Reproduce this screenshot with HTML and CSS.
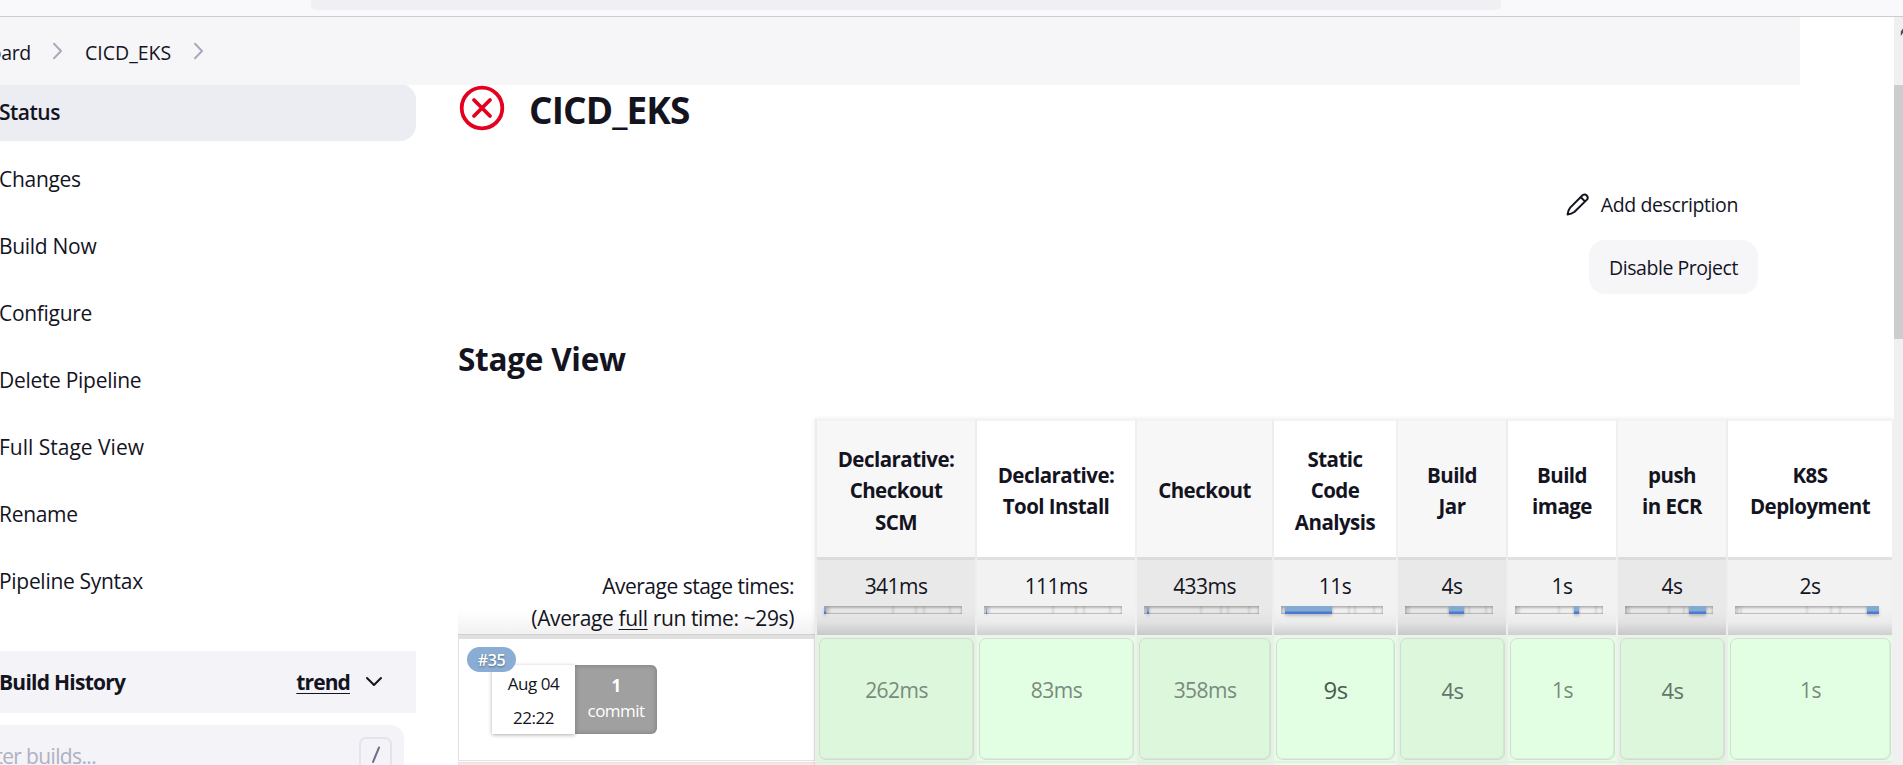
FILE: index.html
```html
<!DOCTYPE html>
<html lang="en">
<head>
<meta charset="utf-8">
<title>CICD_EKS [Jenkins]</title>
<link rel="stylesheet" href="styles.css">
</head>
<body>
<div class="toolbar"><div class="address"></div></div>
<div class="viewport">
  <div class="page">
    <nav class="crumbs">
      <span class="crumb crumb-home">Dashboard</span>
      <svg class="crumb-sep" width="12" height="20" viewBox="0 0 12 20"><path d="M2 2.7 L9 10 L2 17.3"/></svg>
      <span class="crumb crumb-job">CICD_EKS</span>
      <svg class="crumb-sep" width="12" height="20" viewBox="0 0 12 20"><path d="M2 2.7 L9 10 L2 17.3"/></svg>
    </nav>
    <div class="columns">
      <aside class="side">
        <div class="tasks">
          <a class="task active">Status</a>
          <a class="task">Changes</a>
          <a class="task">Build Now</a>
          <a class="task">Configure</a>
          <a class="task">Delete Pipeline</a>
          <a class="task task-wide">Full Stage View</a>
          <a class="task">Rename</a>
          <a class="task">Pipeline Syntax</a>
        </div>
        <div class="history">
          <span class="history-title">Build History</span>
          <a class="trend">trend</a>
          <svg class="history-toggle" width="18" height="12" viewBox="0 0 18 12"><path d="M2 2 L9 9 L16 2"/></svg>
        </div>
        <div class="filter">
          <span class="filter-text"><span>Filter builds...</span></span>
          <span class="key"><svg width="10" height="18" viewBox="0 0 10 18"><path d="M8 1.5 L2 16"/></svg></span>
        </div>
      </aside>
      <main class="main">
        <div class="headline">
          <svg width="46" height="46" viewBox="0 0 46 46"><circle cx="23" cy="23" r="20.3"/><path d="M15 15 L31 31 M31 15 L15 31"/></svg>
          <h1>CICD_EKS</h1>
        </div>
        <div class="actions">
          <a class="describe">
            <svg width="24" height="24" viewBox="0 0 24 24"><path d="M1.6 22.4 Q1.8 18.6 4.2 15.6 L16.8 3 A3.2 3.2 0 0 1 21.2 7.4 L8.6 19.8 Q5.4 22.2 1.6 22.4 Z M14.8 5.2 L19 9.4"/></svg>
            <span>Add description</span>
          </a>
          <button class="disable">Disable Project</button>
        </div>
        <h2>Stage View</h2>
        <div class="stage-view">
          <div class="runs">
            <div class="average">
              <div>Average stage times:</div>
              <div class="full-time">(Average <u>full</u> run time: ~29s)</div>
            </div>
            <div class="run">
              <span class="badge">#35</span>
              <div class="run-box">
                <div class="date"><span>Aug 04</span><span>22:22</span></div>
                <div class="commit"><b>1</b><span>commit</span></div>
              </div>
            </div>
            <div class="run-failed"></div>
          </div>
          <div class="stages" id="stages"></div>
        </div>
      </main>
    </div>
  </div>
  <div class="scrollbar">
    <div class="scroll-up"><svg width="9" height="10" viewBox="0 0 9 10"><path d="M6.8 9 V4.5 L9 1.5 V6 Z"/></svg></div>
    <div class="thumb"></div>
  </div>
</div>
<script src="stages.js"></script>
</body>
</html>
```
FILE: stages.js
```js
const stages = [
  { name: ["Declarative:", "Checkout", "SCM"], avg: "341ms", run: "262ms", weight: "low" },
  { name: ["Declarative:", "Tool Install"], avg: "111ms", run: "83ms", weight: "low" },
  { name: ["Checkout"], avg: "433ms", run: "358ms", weight: "low" },
  { name: ["Static", "Code", "Analysis"], avg: "11s", run: "9s", weight: "high" },
  { name: ["Build", "Jar"], avg: "4s", run: "4s", weight: "mid" },
  { name: ["Build", "image"], avg: "1s", run: "1s", weight: "low" },
  { name: ["push", "in ECR"], avg: "4s", run: "4s", weight: "mid" },
  { name: ["K8S", "Deployment"], avg: "2s", run: "1s", weight: "low", failed: true }
];
// Start of each stage as a share of the whole run, in percent
const marks = [0, 1.4, 2.2, 4, 50, 67, 72.7, 91.7, 100];

document.getElementById("stages").innerHTML = stages.map((stage, i) => {
  const bar = stages.map((_, k) =>
    `<i class="seg${k === i ? " on" : ""}" style="width:${(marks[k + 1] - marks[k]).toFixed(2)}%"></i>`).join("");
  return `<div class="stage">
    <div class="stage-name">${stage.name.map(n => `<span>${n}</span>`).join("")}</div>
    <div class="stage-avg"><span>${stage.avg}</span><div class="bar">${bar}</div></div>
    <div class="stage-cell"><div class="result ${stage.weight}">${stage.run}</div></div>
    <div class="stage-next${stage.failed ? " failed" : ""}"></div>
  </div>`;
}).join("");
```
FILE: styles.css
```css
* { box-sizing: border-box; }
body {
  margin: 0;
  height: 765px;
  overflow: hidden;
  background: #fff;
  color: #14141f;
  font: 21px/32px "Open Sans", "Noto Sans", sans-serif;
  letter-spacing: -0.3px;
  white-space: nowrap;
}
svg { fill: none; stroke: currentColor; stroke-linecap: round; stroke-linejoin: round; flex: none; }
h1, h2 { margin: 0; font-weight: 700; }

.toolbar { height: 17px; background: #f9f9fb; border-bottom: 1px solid #ccc; padding-left: 311px; }
.address { width: 1190px; height: 10px; background: #f0eff4; border-radius: 0 0 5px 5px; }

.viewport { display: flex; height: 748px; }
.page { width: 1894px; overflow: hidden; flex: none; }
.scrollbar { width: 9px; background: #f0f0f0; flex: none; }
.scroll-up { height: 68px; padding-top: 10px; line-height: 0; }
.scroll-up svg { fill: #505050; stroke: none; }
.thumb { height: 254px; background: #cdcdcd; }

.crumbs { display: flex; align-items: center; width: 1800px; height: 68px; background: #f6f6f8; font-size: 19.5px; padding-top: 3px; }
.crumb-home { width: 31px; display: flex; justify-content: flex-end; overflow: hidden; }
.crumb-sep { stroke: #a9a9bc; stroke-width: 2; margin: -3px 0 0 21px; }
.crumb-job { margin-left: 21px; width: 87px; letter-spacing: 0; }

.columns { display: flex; height: 680px; }
.side { width: 416px; flex: none; }
.tasks { margin-top: -1px; display: flex; flex-direction: column; gap: 10px; clip-path: inset(1px 0 0 0); }
.task { height: 57px; line-height: 57px; border-radius: 0 16px 16px 0; text-indent: -1px; }
.task-wide { letter-spacing: 0; }
.active { background: #ecedf3; font-weight: 600; letter-spacing: -0.5px; }
.history { display: flex; align-items: center; height: 62px; margin-top: 41px; background: #f3f3f8; font-weight: 700; padding-right: 33px; }
.history-title { margin-left: -1px; flex: 1; letter-spacing: -0.75px; }
.trend { text-decoration: underline; text-decoration-thickness: 1px; text-underline-offset: 3px; margin-right: 15px; letter-spacing: -0.9px; }
.history-toggle { stroke-width: 2; }
.filter { display: flex; justify-content: space-between; width: 404px; height: 62px; margin-top: 12px; padding: 12px 12px 0 0; background: #f3f3f8; border-radius: 0 14px 14px 0; }
.filter-text { width: 96px; height: 38px; line-height: 38px; display: flex; justify-content: flex-end; overflow: hidden; color: #b0b0c2; letter-spacing: -0.65px; }
.key { width: 33px; height: 38px; border: 2px solid #e4e4ee; border-radius: 7px; display: flex; align-items: center; justify-content: center; color: #70708c; }
.key svg { stroke-width: 2; margin-top: -2px; }

.main { flex: 1; padding-left: 42px; }
.headline { display: flex; align-items: center; height: 46px; padding-left: 1px; color: #e6001f; }
.headline svg { stroke-width: 3.8; }
h1 { margin-left: 24px; color: #14141f; font-size: 37px; line-height: 46px; padding-top: 3px; letter-spacing: -0.9px; }
.actions { display: flex; flex-direction: column; align-items: flex-end; width: 1300px; margin-top: 54px; font-size: 19.5px; }
.describe { display: flex; align-items: center; gap: 11px; height: 40px; padding-right: 20px; letter-spacing: -0.4px; }
.describe svg { stroke-width: 2; margin-top: -2px; }
.disable { width: 169px; height: 54px; margin-top: 15px; border: 0; border-radius: 16px; background: #f6f6f9; color: inherit; font: inherit; letter-spacing: -0.45px; padding: 2px 0 0; }
h2 { font-size: 31.5px; line-height: 40px; margin-top: 45px; letter-spacing: -0.25px; }

.stage-view { display: flex; margin-top: 40px; height: 400px; }
.runs { width: 357px; flex: none; padding-top: 141px; }
.average { height: 75px; padding: 10px 21px 0 0; text-align: right; background: linear-gradient(#fff 50px, #f1f1f1); letter-spacing: -0.5px; }
.average u { text-decoration-thickness: 1px; text-underline-offset: 3px; }
.full-time { letter-spacing: -0.38px; }
.run { height: 126px; border: 1px solid #e2e2e2; border-top: 4px solid #e0e0e0; box-shadow: inset 0 -1px #fff, 0 -1px #d0d0d0; padding-left: 33px; position: relative; padding-top: 26px; }
.badge { position: absolute; left: 8px; top: 8px; width: 49px; height: 25px; border-radius: 13px; background: #8aadd3; color: #fff; font-size: 16px; font-weight: 600; line-height: 26px; text-align: center; text-shadow: 0 1px 2px rgba(0,0,0,.4); }
.run-box { display: flex; height: 69px; font-size: 17px; text-align: center; }
.date { width: 83px; padding-top: 2px; box-shadow: 0 1px 4px rgba(0,0,0,.32); display: flex; flex-direction: column; line-height: 34px; letter-spacing: -0.45px; }
.commit { width: 82px; padding-top: 8px; background: #a0a0a0; color: #fff; border-radius: 0 6px 6px 0; box-shadow: inset 0 0 5px rgba(0,0,0,.25); display: flex; flex-direction: column; line-height: 25px; letter-spacing: -0.55px; position: relative; }
.run-failed { height: 10px; margin-top: 1px; background: #fde7e2; border: 1px solid #e2e2e2; }

.stages { display: grid; grid-template-columns: 160px 160px 137px 124px 110px 110px 110px 166px; border-left: 2px solid #ececec; box-shadow: 0 0 5px rgba(0,0,0,.09); background: #ececec; text-align: center; position: relative; }
.stage { border-right: 2px solid #f0f0f0; border-top: 2px solid #f3f3f3; background: #fff; }
.stage:nth-child(odd) { border-right-color: #ededed; }
.stage-name { height: 136px; display: flex; flex-direction: column; justify-content: center; line-height: 31.5px; font-size: 20.5px; font-weight: 700; letter-spacing: -0.53px; padding-top: 4px; }
.stage:nth-child(odd) .stage-name { background: #f7f7f7; }
.stage-avg { height: 78px; border-top: 3px solid #e1e1e1; padding: 10px 13px 0 7px; background: linear-gradient(#f2f2f2 50px, #ececec 62px, #cfcfcf); letter-spacing: -0.55px; }
.stage:nth-child(odd) .stage-avg { background: linear-gradient(#e9e9e9 50px, #e2e2e2 62px, #c8c8c8); border-top-color: #dcdcdc; }
.stage-avg span { display: block; padding-left: 6px; }
.bar { display: flex; height: 8px; margin-top: 4px; box-shadow: inset 0 2px 3px rgba(0,0,0,.22), inset 0 -1px rgba(0,0,0,.12); }
.seg { box-shadow: inset 0 0 3px rgba(0,0,0,.2); }
.on { background: linear-gradient(#84a9d2 5px, #4a7bd0 6px); box-shadow: 0 2px 3px rgba(0,0,0,.2); }
.stage-cell { height: 126px; padding: 1px 1px 1px 2px; border-top: 2px solid #f0f0f0; background: #e3ffe3; }
.stage:nth-child(odd) .stage-cell { background: #dcf7dc; }
.result { height: 122px; border: 1px solid #d6dad6; border-radius: 7px; line-height: 102px; box-shadow: inset -1px -1px rgba(0,0,0,.06); color: #7a8a7c; letter-spacing: -0.55px; }
.mid { color: #66736a; font-size: 22px; }
.high { color: #4d5a52; font-size: 24px; }
.stage-next { height: 20px; border-top: 2px solid #e8ece8; background: #e3ffe3; }
.stage:nth-child(odd) .stage-next { background: #dcf7dc; }
.stage .failed { background: #ffe8e8; }
```
